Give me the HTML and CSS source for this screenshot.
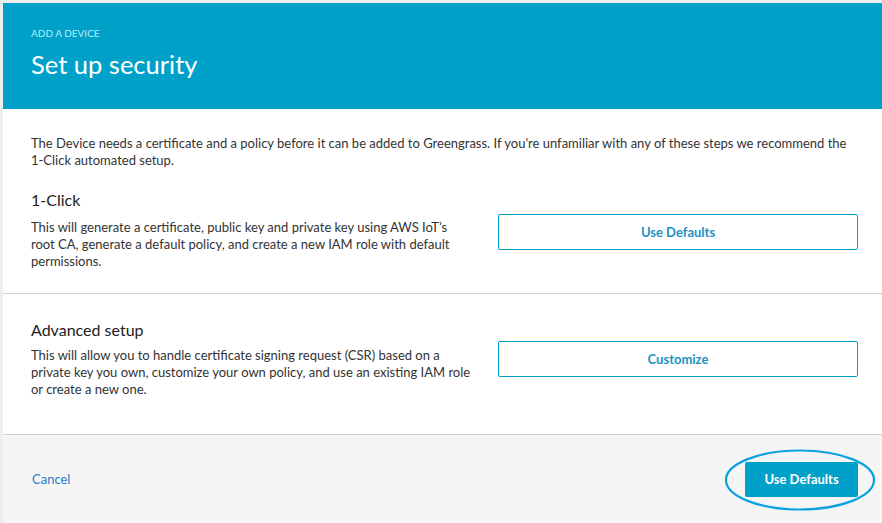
FILE: index.html
```html
<!DOCTYPE html>
<html lang="en">
<head>
<meta charset="utf-8">
<title>Set up security</title>
<link rel="stylesheet" href="styles.css">
</head>
<body>
<div class="page">
  <div class="card">
    <header class="hero">
      <div class="eyebrow">ADD A DEVICE</div>
      <h1 class="title">Set up security</h1>
    </header>
    <section class="intro-section">
      <p class="intro">The Device needs a certificate and a policy before it can be added to Greengrass. If you're unfamiliar with any of these steps we recommend the 1-Click automated setup.</p>
      <div class="option first">
        <div class="option-text">
          <h2 class="option-title">1-Click</h2>
          <p class="option-desc narrow">This will generate a certificate, public key and private key using AWS IoT’s root CA, generate a default policy, and create a new IAM role with default permissions.</p>
        </div>
        <button class="btn-outline" type="button">Use Defaults</button>
      </div>
    </section>
    <section class="option second">
      <div class="option-text">
        <h2 class="option-title">Advanced setup</h2>
        <p class="option-desc">This will allow you to handle certificate signing request (CSR) based on a private key you own, customize your own policy, and use an existing IAM role or create a new one.</p>
      </div>
      <button class="btn-outline" type="button">Customize</button>
    </section>
    <footer class="footer">
      <a class="cancel" href="#">Cancel</a>
      <div class="primary-wrap">
        <button class="btn-primary" type="button">Use Defaults</button>
        <svg class="ring" width="152" height="64" viewBox="0 0 152 64" aria-hidden="true">
          <ellipse cx="76" cy="32" rx="74" ry="29.5" fill="none" stroke="#0aa3e0" stroke-width="2.2"/>
        </svg>
      </div>
    </footer>
  </div>
</div>
</body>
</html>
```

FILE: styles.css
```css
* { box-sizing: border-box; }
html, body { margin: 0; padding: 0; }
body {
  width: 882px;
  height: 523px;
  overflow: hidden;
  background: #eeeeee;
  font-family: Lato, "Liberation Sans", sans-serif;
  color: #333333;
}
.page {
  padding: 3px 0 0 3px;
  height: 100%;
}
.card {
  background: #ffffff;
  height: 100%;
  display: flex;
  flex-direction: column;
}
.hero {
  background: #00a1c9;
  height: 106px;
  padding: 23px 28px 0 28px;
}
.eyebrow {
  font-size: 10px;
  line-height: 14px;
  color: #b4ecfa;
}
.title {
  margin: 7px 0 0 0;
  font-size: 25.5px;
  line-height: 34px;
  font-weight: 400;
  color: #ffffff;
}
.intro-section {
  padding: 26px 24px 0 28px;
  border-bottom: 1px solid #d0d0d0;
}
.intro {
  margin: 0;
  font-size: 13px;
  line-height: 17px;
}
.option {
  display: grid;
  grid-template-columns: 1fr 360px;
  column-gap: 20px;
  align-items: start;
}
.first {
  padding: 21px 0 23px 0;
}
.first .option-title {
  margin-bottom: 9px;
}
.first .btn-outline {
  margin-top: 24px;
}
.second {
  padding: 26px 24px 36px 28px;
  border-bottom: 1px solid #d0d0d0;
}
.second .option-title {
  margin-bottom: 7px;
}
.second .btn-outline {
  margin-top: 21px;
}
.option-title {
  margin: 0;
  font-size: 16px;
  line-height: 20px;
  font-weight: 400;
  color: #222222;
}
.option-desc {
  margin: 0;
  font-size: 13px;
  line-height: 17px;
}
.narrow {
  max-width: 438px;
}
.btn-outline {
  height: 36px;
  background: #ffffff;
  border: 1px solid #00a1c9;
  border-radius: 2px;
  font-family: inherit;
  font-size: 13px;
  font-weight: 700;
  color: #1a93c2;
}
.footer {
  flex: 1;
  background: #f5f5f5;
  display: flex;
  align-items: center;
  justify-content: space-between;
  padding: 0 24px 0 29px;
}
.cancel {
  font-size: 13px;
  color: #2b7bcb;
  text-decoration: none;
}
.primary-wrap {
  position: relative;
}
.btn-primary {
  display: block;
  width: 113px;
  height: 35px;
  border: none;
  border-radius: 2px;
  background: #00a1c9;
  color: #ffffff;
  font-family: inherit;
  font-size: 13px;
  font-weight: 700;
}
.ring {
  position: absolute;
  left: -21px;
  top: -14px;
  pointer-events: none;
}
```
